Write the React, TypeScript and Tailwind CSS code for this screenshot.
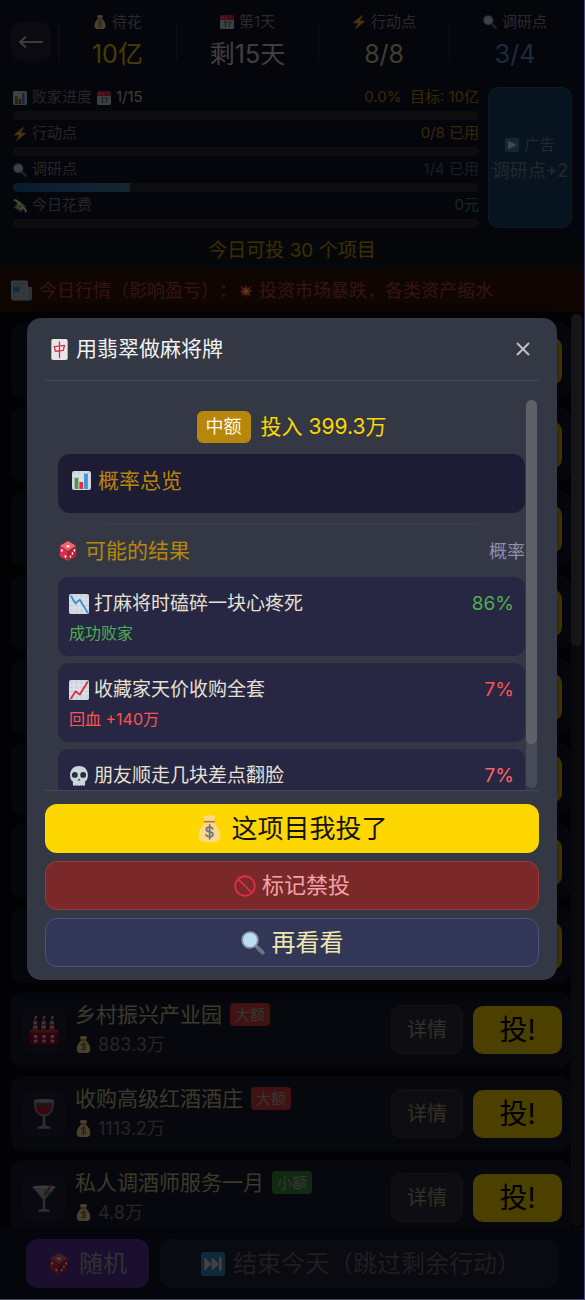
import React from "react";

type IconProps = { className?: string };

const svgBase = "inline-block shrink-0";

function MoneyBag({ className = "size-4" }: IconProps) {
  return (
    <svg viewBox="0 0 36 36" className={`${svgBase} ${className}`} aria-hidden="true">
      <path fill="#FDD888" d="M31.9 25.7c.3-1.8-.1-3.6-1.2-5 .1-1.900-.7-3.700-2.200-4.700C26.300 12.600 23.500 10 22 8.500V7h-8v1.500C12.500 10 9.700 12.600 7.500 16c-1.500 1-2.300 2.800-2.200 4.700-1.100 1.400-1.500 3.200-1.200 5-.9 2.100-.7 4.600.8 6.400 1.100 2.200 3.400 3.900 5.900 3.900h14.400c2.500 0 4.800-1.700 5.900-3.900 1.500-1.800 1.700-4.300.8-6.400z" />
      <path fill="#BF6952" d="M12 7.500h12c.8 0 1.200.5 1.200 1.200 0 .7-.4 1.300-1.200 1.300H12c-.8 0-1.200-.6-1.200-1.300 0-.7.4-1.200 1.200-1.200z" />
      <path fill="#FDD888" d="M23.700 7.500H12.300C12 5 9.800 3.200 10.200 1.500c.3-1.200 2.200-.4 3.600-.3C15 1.200 15.500.2 18 .2s3 1 4.200 1c1.400-.1 3.300-.9 3.600.3.400 1.700-1.800 3.500-2.100 6z" />
      <path d="M22.500 18.300c-.9-1.500-2.500-2.200-4.400-2.200-2.600 0-4.400 1.200-4.400 3.200 0 4.400 8.900 2 8.900 6.400 0 2-1.900 3.300-4.500 3.300-2.100 0-3.900-.8-4.800-2.500M18.200 13.300v18.500" fill="none" stroke="#67757F" strokeWidth="2.300" strokeLinecap="round" />
    </svg>
  );
}

function Calendar({ className = "size-4" }: IconProps) {
  return (
    <svg viewBox="0 0 36 36" className={`${svgBase} ${className}`} aria-hidden="true">
      <path fill="#CBD2D7" d="M36 32a4 4 0 0 1-4 4H4a4 4 0 0 1-4-4V9h36z" />
      <path fill="#DD2E44" d="M32 0H4a4 4 0 0 0-4 4v9h36V4a4 4 0 0 0-4-4z" />
      <path d="M4 9V4.500l2.500 3L9 4.500V9M13 9V5.500M16.500 4.500V9h3M26 2.500h3" fill="none" stroke="#F4ABBA" strokeWidth="1.600" />
      <path d="M11 19.500l3-2.500v14M19 18h8.500c-3 4-4.500 8-4.800 13" fill="none" stroke="#66757F" strokeWidth="3.200" />
    </svg>
  );
}

function Bolt({ className = "size-4" }: IconProps) {
  return (
    <svg viewBox="0 0 36 36" className={`${svgBase} ${className}`} aria-hidden="true">
      <path fill="#FFAC33" d="M32.900 15.600A1 1 0 0 0 32 15H19.900L27.500 1.800a1 1 0 0 0-.2-1.300 1 1 0 0 0-1.300 0L18 7.100 3.400 19.200A1 1 0 0 0 4 21h12.100L8.500 34.200a1 1 0 0 0 .2 1.300 1 1 0 0 0 1.300 0L18 28.900l14.600-12.100a1 1 0 0 0 .3-1.200z" />
    </svg>
  );
}

function Magnifier({ className = "size-4" }: IconProps) {
  return (
    <svg viewBox="0 0 36 36" className={`${svgBase} ${className}`} aria-hidden="true">
      <path d="M22.500 22.500l3.500 3.500" stroke="#9AAAB4" strokeWidth="4" />
      <path d="M25.500 25.500l7 7" stroke="#66757F" strokeWidth="6" strokeLinecap="round" />
      <circle cx="13.500" cy="13.500" r="13" fill="#8899A6" />
      <circle cx="13.500" cy="13.500" r="10.500" fill="#BBDDF5" />
    </svg>
  );
}

function BarChart({ className = "size-4" }: IconProps) {
  return (
    <svg viewBox="0 0 36 36" className={`${svgBase} ${className}`} aria-hidden="true">
      <rect width="36" height="36" rx="4" fill="#CCD6DD" />
      <path d="M1 9h34M1 17h34M1 25h34M9 1v34M18 1v34M27 1v34" stroke="#E1E8ED" strokeWidth="1.800" />
      <rect x="5" y="13" width="7" height="21" fill="#5C913B" />
      <rect x="23" y="5" width="7" height="29" fill="#3B94D9" />
      <rect x="14" y="21" width="7" height="13" fill="#DD2E44" />
    </svg>
  );
}

function TrendChart({ className = "size-5", up = false }: IconProps & { up?: boolean }) {
  return (
    <svg viewBox="0 0 36 36" className={`${svgBase} ${className}`} aria-hidden="true">
      <rect width="36" height="36" rx="3" fill="#CCD6DD" />
      <path d="M1 9h34M1 17h34M1 25h34M9 1v34M18 1v34M27 1v34" stroke="#E1E8ED" strokeWidth="1.800" />
      {up ? (
        <path d="M4 33l7.500-12.500 8 5.500L33 4" fill="none" stroke="#DD2E44" strokeWidth="3.400" strokeLinejoin="round" strokeLinecap="round" />
      ) : (
        <path d="M4 4l7.500 13 8-6.500L33 33" fill="none" stroke="#3B94D9" strokeWidth="3.400" strokeLinejoin="round" strokeLinecap="round" />
      )}
    </svg>
  );
}

function FlyingMoney({ className = "size-4" }: IconProps) {
  return (
    <svg viewBox="0 0 36 36" className={`${svgBase} ${className}`} aria-hidden="true">
      <path fill="#5C913B" d="M1 21L18 5l17 14-15 15z" />
      <path fill="#A7D28B" d="M6 21L18 9l12 10-10 10z" />
      <path fill="#FFE8B6" d="M9 10l7-4 13 17-7 5z" />
      <path fill="#E1E8ED" d="M0 4c4-4 8-4 12-1 3 2 3 6 1 10C11 8 6 6 0 4zM23 22c6-1 11 2 13 8-1 4-3 5-5 5 0-5-3-9-8-13z" />
      <circle cx="18" cy="19" r="3" fill="#5C913B" />
    </svg>
  );
}

function Newspaper({ className = "size-5" }: IconProps) {
  return (
    <svg viewBox="0 0 36 36" className={`${svgBase} ${className}`} aria-hidden="true">
      <path fill="#99AAB5" d="M27 12h7a2 2 0 0 1 2 2v18a3 3 0 0 1-3 3h-6z" />
      <path fill="#BCC6CD" d="M3 1h23a3 3 0 0 1 3 3v28a3 3 0 0 0 3 3H4a4 4 0 0 1-4-4V4a3 3 0 0 1 3-3z" />
      <rect x="3" y="4" width="23" height="4" rx="1" fill="#99AAB5" />
      <rect x="3" y="11" width="12" height="10" fill="#3B94D9" />
      <path d="M17 12h9M17 16h9M17 20h9M3 24h23M3 28h23M3 32h23" stroke="#99AAB5" strokeWidth="1.500" />
    </svg>
  );
}

function Explosion({ className = "size-4" }: IconProps) {
  return (
    <svg viewBox="0 0 36 36" className={`${svgBase} ${className}`} aria-hidden="true">
      <path fill="#DD2E44" d="M1 3l12 6 5-8 3 8 12-5-5 10 8 5-9 3 5 11-10-5-4 8-4-9-10 6 4-10-8-4 8-5z" />
      <path fill="#FFAC33" d="M8 9l7 4 3-6 2 6 7-3-3 6 6 3-6 2 3 6-6-2-3 5-3-5-6 3 3-6-6-3 6-3z" />
      <circle cx="18" cy="18" r="4" fill="#FFE8B6" />
    </svg>
  );
}

function PlayTile({ className = "size-4", next = false }: IconProps & { next?: boolean }) {
  return (
    <svg viewBox="0 0 36 36" className={`${svgBase} ${className}`} aria-hidden="true">
      <rect width="36" height="36" rx="4" fill="#3B88C3" />
      {next ? (
        <path fill="#DDD" d="M5 8l11 10L5 28zM16 8l11 10-11 10zM27 8h4v20h-4z" />
      ) : (
        <path fill="#EEE" d="M8 7l22 11L8 29z" />
      )}
    </svg>
  );
}

function Dice({ className = "size-5" }: IconProps) {
  return (
    <svg viewBox="0 0 36 36" className={`${svgBase} ${className}`} aria-hidden="true">
      <path fill="#F4606F" d="M18 0l14.500 8.500L18 18 3.500 8.500z" />
      <path fill="#DD2E44" d="M3 9.500L17.500 18.500V36L4.500 28.500Q3 27.500 3 26z" />
      <path fill="#C1203A" d="M33 9.500L18.500 18.500V36l13-7.500q1.500-1 1.500-2.500z" />
      <g fill="#FFF">
        <ellipse cx="18" cy="9.500" rx="3" ry="2" />
        <ellipse cx="7" cy="17" rx="1.700" ry="2.300" />
        <ellipse cx="13.500" cy="28" rx="1.700" ry="2.300" />
        <ellipse cx="29.500" cy="17" rx="1.500" ry="2.100" />
        <ellipse cx="26" cy="22.500" rx="1.500" ry="2.100" />
        <ellipse cx="22.500" cy="28" rx="1.500" ry="2.100" />
      </g>
    </svg>
  );
}

function MahjongTile({ className = "h-5 w-4" }: IconProps) {
  return (
    <svg viewBox="0 0 28 36" className={`${svgBase} ${className}`} aria-hidden="true">
      <rect width="28" height="36" rx="3" fill="#E6E7E8" />
      <path d="M5 12.500l2 8.500M5.500 13L22.500 11l-2 8.500L7 21M14 5v27" fill="none" stroke="#DD2E44" strokeWidth="2.200" strokeLinejoin="round" strokeLinecap="round" />
    </svg>
  );
}

function Skull({ className = "size-5" }: IconProps) {
  return (
    <svg viewBox="0 0 36 36" className={`${svgBase} ${className}`} aria-hidden="true">
      <path fill="#CCD6DD" d="M34 16C34 6 26.800 0 18 0S2 6 2 16c0 5.600 1.500 9.500 5 11.700V33c0 3.500 4.500 3.500 4.500.5 0 3.300 4.300 3.300 4.300 0 0 3.300 4.400 3.300 4.400 0 0 3.300 4.300 3.300 4.300 0 0 3 4.500 3 4.500-.5v-5.300c3.500-2.200 5-6.100 5-11.700z" />
      <circle cx="10.500" cy="16" r="5.300" fill="#292F33" />
      <circle cx="25.500" cy="16" r="5.300" fill="#292F33" />
      <path d="M15.500 26l2.500-3.500 2.500 3.500z" fill="#292F33" />
    </svg>
  );
}

function Prohibited({ className = "size-5" }: IconProps) {
  return (
    <svg viewBox="0 0 36 36" className={`${svgBase} ${className}`} aria-hidden="true">
      <circle cx="18" cy="18" r="16" fill="none" stroke="#DD2E44" strokeWidth="3" />
      <path d="M7 7l22 22" stroke="#DD2E44" strokeWidth="3" />
    </svg>
  );
}

function Factory({ className = "size-[30px]" }: IconProps) {
  return (
    <svg viewBox="0 0 36 36" className={`${svgBase} ${className}`} aria-hidden="true">
      {[5.500, 15.500, 25.500].map((x) => (
        <g key={x}>
          <path fill="#B8BFC4" d={`M${x} 6h4l1 13h-6z`} />
          <path stroke="#DD2E44" strokeWidth="2.200" d={`M${x - 0.500} 7h5M${x - 0.700} 12h5.400M${x - 0.900} 17h5.800`} />
          <path stroke="#CCD6DD" strokeWidth="2.200" strokeLinecap="round" d={`M${x + 2} 4l1-2`} />
        </g>
      ))}
      <rect x="1" y="18" width="34" height="17" rx="1.500" fill="#A0041E" />
      <rect x="1" y="18" width="34" height="3.500" fill="#BE3A30" />
      <path fill="#CCD6DD" d="M6 24h4v3.500H6zM16 24h4v3.500h-4zM26 24h4v3.500h-4zM6 29.500h4V33H6zM16 29.500h4V33h-4zM26 29.500h4V33h-4z" />
    </svg>
  );
}

function WineGlass({ className = "size-8" }: IconProps) {
  return (
    <svg viewBox="0 0 36 36" className={`${svgBase} ${className}`} aria-hidden="true">
      <path fill="#8899A6" d="M7 2h22c1 8-1 17-9.500 18.500V31c4 .5 6 1.500 6 3.500h-15c0-2 2-3 6-3.500V20.500C8 19 6 10 7 2z" />
      <path fill="#4A555E" d="M9 5h18v4H9z" />
      <path fill="#BE1931" d="M9.200 9h17.600c0 5-3 9.500-8.800 9.500S9.200 14 9.200 9z" />
      <ellipse cx="18" cy="3" rx="11" ry="2" fill="#AAB5BD" />
    </svg>
  );
}

function Cocktail({ className = "size-[30px]" }: IconProps) {
  return (
    <svg viewBox="0 0 36 36" className={`${svgBase} ${className}`} aria-hidden="true">
      <path fill="#8899A6" d="M4 5h28L19.500 19.500V31c4 .5 6 1.500 6 3.500h-15c0-2 2-3 6-3.500V19.500z" />
      <path fill="#AAB5BD" d="M8 8h20l-10 10z" />
      <ellipse cx="18" cy="5" rx="14" ry="2" fill="#BDC9D0" />
      <path d="M27 1L19 15" stroke="#BE1931" strokeWidth="2" />
      <circle cx="21" cy="11" r="3" fill="#5C913B" />
    </svg>
  );
}

function BackArrow() {
  return (
    <svg viewBox="0 0 24 12" className="h-3 w-6" fill="none" stroke="#c8c8c8" strokeWidth="2" aria-hidden="true">
      <path d="M1 6h23M7 0.500L1 6l6 5.500" />
    </svg>
  );
}

const stats = [
  { icon: <MoneyBag className="size-[14px]" />, label: "待花", value: "10亿", tone: "text-[#f0ca00]" },
  { icon: <Calendar className="size-[14px]" />, label: "第1天", value: "剩15天", tone: "text-[#d8d4c8]" },
  { icon: <Bolt className="size-[14px]" />, label: "行动点", value: "8/8", tone: "text-[#d6cda0]" },
  { icon: <Magnifier className="size-[14px]" />, label: "调研点", value: "3/4", tone: "text-[#5f90cc]" },
];

const progress = [
  {
    icon: <BarChart className="size-[14px]" />,
    label: "败家进度",
    extra: (
      <>
        <Calendar className="size-[14px]" />
        <span className="text-[#d6cda0]">1/15</span>
      </>
    ),
    value: "0.0%  目标: 10亿",
    tone: "text-[#b8860b]",
    fill: 0,
  },
  { icon: <Bolt className="size-[14px]" />, label: "行动点", value: "0/8 已用", tone: "text-[#b8860b]", fill: 0 },
  { icon: <Magnifier className="size-[14px]" />, label: "调研点", value: "1/4 已用", tone: "text-[#506a90]", fill: 25 },
  { icon: <FlyingMoney className="size-[14px]" />, label: "今日花费", value: "0元", tone: "text-[#46964a]", fill: 0 },
];

type Project = { name: string; price: string; tag: string; tagTone: string; icon: React.ReactNode };

const projects: Project[] = [
  { name: "乡村振兴产业园", price: "883.3万", tag: "大额", tagTone: "bg-[#d83c3c]", icon: <Factory /> },
  { name: "收购高级红酒酒庄", price: "1113.2万", tag: "大额", tagTone: "bg-[#d83c3c]", icon: <WineGlass /> },
  { name: "私人调酒师服务一月", price: "4.8万", tag: "小额", tagTone: "bg-[#38903c]", icon: <Cocktail /> },
];

const coveredHeights = ["h-[75px]", "h-[75px]", "h-[75px]", "h-[75px]", "h-[75px]", "h-[72px]", "h-[75px]", "h-[75px]"];

const outcomes = [
  { icon: <TrendChart />, title: "打麻将时磕碎一块心疼死", note: "成功败家", chance: "86%", tone: "text-[#4caf50]" },
  { icon: <TrendChart up />, title: "收藏家天价收购全套", note: "回血 +140万", chance: "7%", tone: "text-[#ff5252]" },
  { icon: <Skull />, title: "朋友顺走几块差点翻脸", note: "", chance: "7%", tone: "text-[#ff6464]" },
];

function ProjectRow({ project }: { project: Project }) {
  return (
    <li className="flex h-[75px] shrink-0 items-center rounded-xl bg-[#191b2c] pr-[9px] pl-[11px]">
      <div className="grid size-11 shrink-0 place-items-center rounded-lg bg-[#212133]">{project.icon}</div>
      <div className="ml-[9px] min-w-0 flex-1">
        <div className="flex h-[30px] items-center gap-2 text-[21px] whitespace-nowrap text-[#c8bf90]">
          {project.name}
          <span className={`rounded px-[5px] text-[15px] leading-[23px] text-[#b4b4b4] ${project.tagTone}`}>{project.tag}</span>
        </div>
        <div className="flex h-[30px] items-center gap-[6px] text-[18px] text-[#7c7c86]">
          <MoneyBag className="size-[17px]" />
          {project.price}
        </div>
      </div>
      <button className="h-[49px] w-[72px] shrink-0 rounded-[10px] border border-[#3a3a4e] bg-[#2d2d3c] text-[20px] text-[#aaa27e]">详情</button>
      <button className="ml-[10px] h-12 w-[89px] shrink-0 rounded-[10px] bg-[#ffd700] text-[28px] leading-none text-black">投!</button>
    </li>
  );
}

function GamePage() {
  return (
    <main className="flex min-h-0 flex-1 flex-col bg-[#13132a]">
      <header className="flex items-center pt-[11px] pr-[4px] pb-3 pl-[11px]">
        <button aria-label="返回" className="grid h-[39px] w-10 shrink-0 place-items-center rounded-[10px] bg-[#222238]">
          <BackArrow />
        </button>
        <dl className="ml-[7px] flex flex-1 items-center">
          {stats.map((s) => (
            <div key={s.label} className="flex flex-auto items-center">
              <div className="h-[39px] w-px bg-[#34344a]" />
              <div className="flex flex-1 flex-col items-center gap-[5px]">
                <dt className="flex items-center gap-[5px] text-[15px] leading-[21px] text-[#8c8c94]">
                  {s.icon}
                  {s.label}
                </dt>
                <dd className={`text-[25px] leading-[35px] ${s.tone}`}>{s.value}</dd>
              </div>
            </div>
          ))}
        </dl>
      </header>

      <section className="flex gap-[9px] pr-3 pb-1 pl-[13px]">
        <div className="min-w-0 flex-1">
          {progress.map((p) => (
            <div key={p.label}>
              <div className="flex h-[27px] items-center gap-[5px] text-[15px] text-[#7c7c84]">
                {p.icon}
                {p.label}
                {p.extra}
                <span className={`ml-auto whitespace-pre ${p.tone}`}>{p.value}</span>
              </div>
              <div className="h-[9px] overflow-hidden rounded-full bg-[#2c2c34]">
                <div className="h-full bg-linear-to-r from-[#145c9c] to-[#4c7ea8]" style={{ width: `${p.fill}%` }} />
              </div>
            </div>
          ))}
        </div>
        <button className="mt-[3px] flex w-[84px] flex-col items-center justify-center rounded-[10px] border border-[#2a5580] bg-[#184468] text-[#788592]">
          <span className="flex items-center gap-[5px] text-[15px] leading-[26px]">
            <PlayTile className="size-[14px]" />
            广告
          </span>
          <span className="text-[18px] leading-[26px] whitespace-nowrap">调研点+2</span>
        </button>
      </section>

      <p className="bg-[#161924] text-center text-[19px] leading-[37px] text-[#c0a200]">今日可投 30 个项目</p>

      <p className="flex h-[43px] items-center bg-[#34120c] pl-[11px] text-[18px] whitespace-nowrap text-[#b44242] [text-spacing-trim:space-all]">
        <Newspaper className="mr-[7px] size-[21px]" />
        今日行情（影响盈亏）：
        <Explosion className="mr-[6px] ml-[2px] size-[14px]" />
        投资市场暴跌，各类资产缩水
      </p>

      <section className="flex min-h-0 flex-1 bg-[#0c0c14]">
        <ul className="flex min-w-0 flex-1 flex-col gap-[9px] overflow-hidden pt-[11px] pl-[11px]">
          {coveredHeights.map((height, i) => (
            <li key={i} className={`flex shrink-0 items-center justify-end rounded-xl bg-[#191b2c] pr-[9px] ${height}`}>
              <span className="h-12 w-[89px] rounded-[10px] bg-[#ffd700]" />
            </li>
          ))}
          {projects.map((p) => (
            <ProjectRow key={p.name} project={p} />
          ))}
        </ul>
        <div className="mt-[2px] mr-[2px] mb-[2px] w-[11px] rounded-full bg-[#23212b]">
          <div className="h-[332px] rounded-full bg-[#4c4c52]" />
        </div>
      </section>

      <footer className="flex gap-[11px] py-[11px] pr-[26px] pl-[26px]">
        <button className="flex h-[49px] w-[123px] items-center justify-center gap-[9px] rounded-xl bg-[#57339e] text-[24px] text-[#a2a2a2]">
          <Dice className="size-[22px]" />
          随机
        </button>
        <button className="flex h-[49px] flex-1 items-center justify-center gap-2 rounded-xl bg-[#22223a] pl-1 text-[24px] whitespace-nowrap text-[#66666e]">
          <PlayTile next className="size-6" />
          结束今天（跳过剩余行动）
        </button>
      </footer>
    </main>
  );
}

function InvestDialog() {
  return (
    <div
      role="dialog"
      aria-modal="true"
      aria-labelledby="dialog-title"
      className="w-full max-w-[530px] rounded-[14px] bg-[#333844] px-[18px] pb-[13px] shadow-[0_4px_16px_rgba(0,0,0,0.6)]"
    >
      <div className="flex h-[63px] items-center border-b border-[#4a4c5c] pr-[9px] pl-[6px]">
        <MahjongTile className="mr-[8px] h-[21px] w-[17px]" />
        <h2 id="dialog-title" className="flex-1 text-[21px] text-[#f2f2f2]">
          用翡翠做麻将牌
        </h2>
        <button aria-label="关闭" className="p-0">
          <svg viewBox="0 0 14 14" className="size-[14px]" stroke="#c0c0c0" strokeWidth="2" aria-hidden="true">
            <path d="M1 1l12 12M13 1L1 13" />
          </svg>
        </button>
      </div>

      <div className="flex border-b border-[#464857] pr-[2px] pl-[13px]">
        <div className="max-h-[409px] min-w-0 flex-1 overflow-y-auto pt-[30px] [scrollbar-width:none]">
          <div className="flex h-8 items-center justify-center gap-[10px]">
            <span className="rounded-md bg-[#b8860b] px-[9px] text-[18px] leading-8 text-[#fff8e6]">中额</span>
            <span className="text-[21px] leading-8 text-[#ffd700]">投入 399.3万</span>
          </div>
          <div className="mt-[11px] flex h-[59px] items-start gap-[7px] rounded-xl bg-[#1e1c34] px-[14px] pt-[11px]">
            <BarChart className="mt-[6px] size-[19px]" />
            <h3 className="text-[21px] leading-8 text-[#b8860b]">概率总览</h3>
          </div>
          <hr className="mx-auto mt-[11px] w-4/5 border-[#3e3c62]" />
          <div className="flex h-[52px] items-center text-[21px] text-[#b8860b]">
            <Dice className="mr-[7px] size-5" />
            <h3 className="flex-1">可能的结果</h3>
            <span className="text-[18px] text-[#928eac]">概率</span>
          </div>
          <ul className="flex flex-col gap-[7px]">
            {outcomes.map((o) => (
              <li key={o.title} className="h-[79px] rounded-[10px] bg-[#272744] px-[11px] pt-[11px]">
                <div className="flex h-8 items-center gap-[5px] text-[19px] text-[#e6e0d2]">
                  {o.icon}
                  <span className="flex-1">{o.title}</span>
                  <span className={`text-[19px] ${o.tone}`}>{o.chance}</span>
                </div>
                <p className={`text-[16px] leading-[26px] ${o.tone}`}>{o.note}</p>
              </li>
            ))}
          </ul>
        </div>
        <div className="mt-[19px] mb-[2px] ml-px w-[11px] rounded-full bg-[#474b57]">
          <div className="h-[344px] rounded-full bg-[#5f6068]" />
        </div>
      </div>

      <div className="mt-[13px] flex flex-col gap-2">
        <button className="flex h-[49px] items-center justify-center gap-2 rounded-xl bg-[#ffd700] text-[26px] text-[#14140a]">
          <MoneyBag className="size-[27px]" />
          这项目我投了
        </button>
        <button className="flex h-[49px] items-center justify-center gap-[6px] rounded-xl border border-[#a03838] bg-[#7a282a] text-[22px] text-[#f0a4a4]">
          <Prohibited className="size-[22px]" />
          标记禁投
        </button>
        <button className="flex h-[49px] items-center justify-center gap-[7px] rounded-xl border border-[#4b5080] bg-[#333757] text-[24px] text-[#f0e6b0]">
          <Magnifier className="size-[24px]" />
          再看看
        </button>
      </div>
    </div>
  );
}

export default function App() {
  return (
    <div className="relative flex h-screen flex-col overflow-hidden border-r border-b border-[#4c4678] bg-black font-['Inter','Noto_Sans_CJK_SC',sans-serif]">
      <GamePage />
      <div className="absolute inset-0 flex items-center justify-center bg-black/70 px-[27px] pb-px">
        <InvestDialog />
      </div>
    </div>
  );
}
